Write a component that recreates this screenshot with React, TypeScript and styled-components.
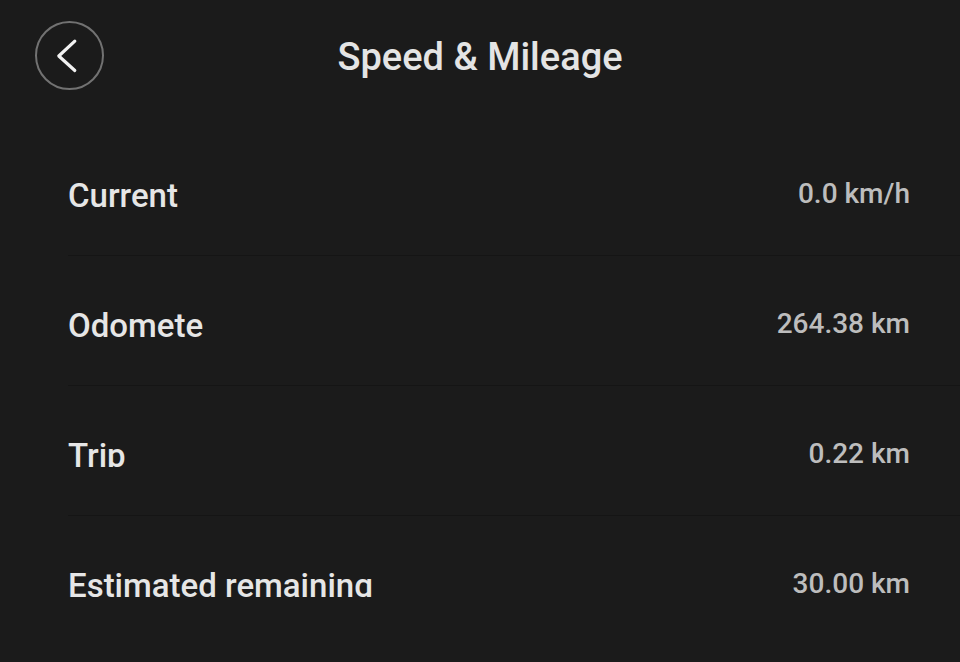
import React from "react";
import styled, { createGlobalStyle } from "styled-components";

const GlobalStyle = createGlobalStyle`
  html, body {
    margin: 0;
    padding: 0;
    background: #1b1b1b;
  }
  body {
    font-family: Roboto, "Noto Sans", "Liberation Sans", sans-serif;
    -webkit-font-smoothing: antialiased;
  }
`;

const Page = styled.div`
  width: 960px;
  height: 662px;
  background: #1b1b1b;
  overflow: hidden;
  display: flex;
  flex-direction: column;
`;

const Header = styled.header`
  height: 126px;
  box-sizing: border-box;
  padding-top: 21px;
  display: grid;
  grid-template-columns: 1fr auto 1fr;
  align-items: start;
`;

const BackButton = styled.button`
  width: 69px;
  height: 69px;
  margin-left: 35px;
  padding: 0;
  border: 2px solid #727272;
  border-radius: 50%;
  background: transparent;
  display: flex;
  align-items: center;
  justify-content: center;
  box-sizing: border-box;
  cursor: pointer;
`;

const Title = styled.h1`
  margin: 17px 0 0;
  font-size: 38px;
  line-height: 1;
  font-weight: 500;
  color: #e4e4e4;
  white-space: nowrap;
`;

const List = styled.div`
  display: flex;
  flex-direction: column;
`;

const Row = styled.div`
  margin-left: 68px;
  height: 130px;
  box-sizing: border-box;
  border-bottom: 1px solid #151515;
  padding: 53px 50px 0 0;
  display: flex;
  justify-content: space-between;
  align-items: flex-start;

  &:last-child {
    border-bottom-color: transparent;
  }
`;

const Label = styled.span`
  display: block;
  height: 28px;
  overflow: hidden;
  font-size: 33px;
  line-height: 33px;
  font-weight: 500;
  color: #e6e6e6;
  white-space: nowrap;
`;

const Value = styled.span`
  display: block;
  margin-top: 1px;
  font-size: 28px;
  line-height: 28px;
  font-weight: 500;
  color: #bdbdbd;
  white-space: nowrap;
`;

const rows = [
  { label: "Current", value: "0.0 km/h" },
  { label: "Odomete", value: "264.38 km" },
  { label: "Trip", value: "0.22 km" },
  { label: "Estimated remaining", value: "30.00 km" },
];

const ChevronLeft = () => (
  <svg width="65" height="65" viewBox="0 0 65 65" fill="none">
    <polyline
      points="37.8,18.2 21.8,33 37.8,47.5"
      stroke="#f2f2f2"
      strokeWidth="3.2"
      strokeLinecap="round"
      strokeLinejoin="round"
    />
  </svg>
);

export default function App() {
  return (
    <>
      <GlobalStyle />
      <Page>
        <Header>
          <BackButton aria-label="Back">
            <ChevronLeft />
          </BackButton>
          <Title>Speed &amp; Mileage</Title>
          <span />
        </Header>
        <List>
          {rows.map((r) => (
            <Row key={r.label}>
              <Label>{r.label}</Label>
              <Value>{r.value}</Value>
            </Row>
          ))}
        </List>
      </Page>
    </>
  );
}
